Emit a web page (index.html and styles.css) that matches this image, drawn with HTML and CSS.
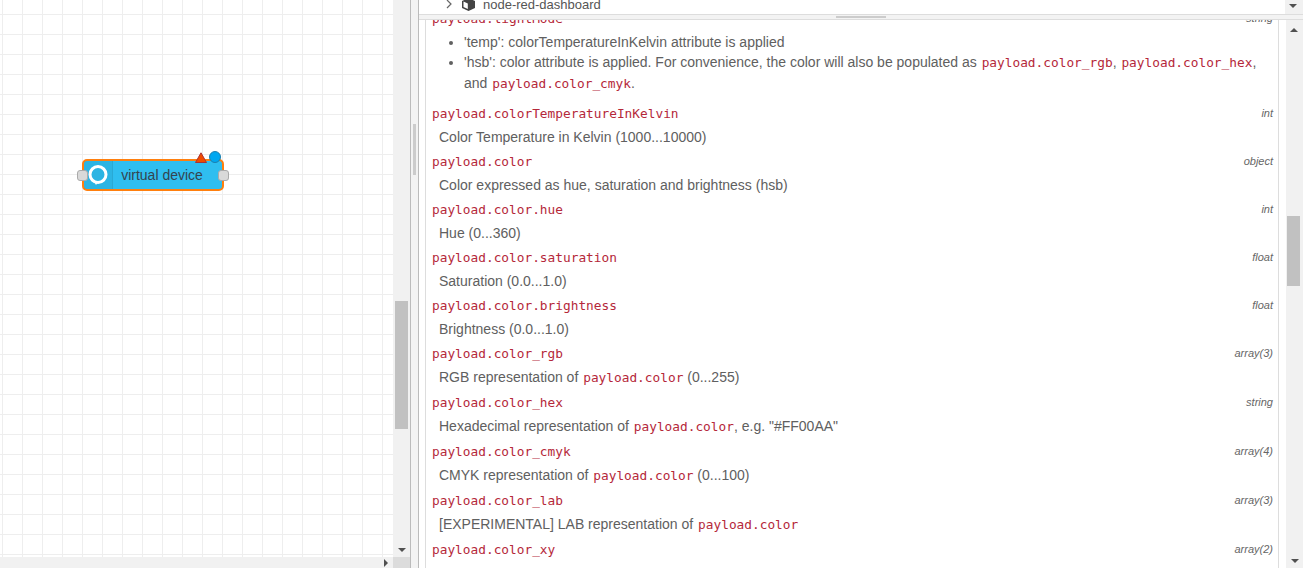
FILE: index.html
```
<!DOCTYPE html>
<html lang="en">
<head>
<meta charset="utf-8">
<title>Node-RED help</title>
<link rel="stylesheet" href="styles.css">
</head>
<body>
<div class="workspace">
  <div class="work-main">
    <div class="canvas">
      <div class="node">
        <div class="node-icon">
          <svg width="22" height="22" viewBox="0 0 22 22"><circle cx="11" cy="10.5" r="8" fill="none" stroke="#fff" stroke-width="3"/><path d="M6.5 16.5 L9 21 L11 18" fill="#fff"/></svg>
        </div>
        <div class="node-label">virtual device</div>
        <span class="port port-in"></span>
        <span class="port port-out"></span>
        <svg class="node-warn" width="12" height="11" viewBox="0 0 12 11"><path d="M6 0.8 L11.5 10.5 L0.5 10.5 Z" fill="#f04b00" stroke="#a33" stroke-width="1"/></svg>
        <span class="node-dot"></span>
      </div>
    </div>
    <div class="vbar vbar-canvas">
      <span class="arrow-down"></span>
      <span class="thumb thumb-canvas"></span>
    </div>
  </div>
  <div class="hbar">
    <div class="hbar-track"><span class="arrow-right"></span></div>
    <div class="corner"></div>
  </div>
</div>
<div class="separator"><span class="grip"></span></div>
<div class="sidebar">
  <div class="tree">
    <div class="tree-row">
      <svg class="chev" width="8" height="10" viewBox="0 0 8 10"><path d="M2 1 L6 5 L2 9" fill="none" stroke="#666" stroke-width="1.2"/></svg>
      <svg class="cube" width="13" height="13" viewBox="0 0 13 13"><path d="M6.5 0 L13 3 L13 10 L6.5 13 L0 10 L0 3 Z" fill="#444"/><path d="M1.5 3.6 L5.8 5.6 L5.8 11 L1.5 9 Z" fill="#fff"/></svg>
      <span>node-red-dashboard</span>
    </div>
    <div class="vbar vbar-tree"><span class="arrow-down arrow-tree"></span></div>
  </div>
  <div class="divider"><span class="divider-grip"></span></div>
  <div class="help-wrap">
    <div class="help">
      <div class="help-inner">
        <div class="prop prop-clipped"><code>payload.lightMode</code><i>string</i></div>
        <ul>
          <li>'temp': colorTemperatureInKelvin attribute is applied</li>
          <li>'hsb': color attribute is applied. For convenience, the color will also be populated as <code>payload.color_rgb</code>, <code>payload.color_hex</code>, and <code>payload.color_cmyk</code>.</li>
        </ul>
        <div class="prop"><code>payload.colorTemperatureInKelvin</code><i>int</i></div>
        <div class="desc">Color Temperature in Kelvin (1000...10000)</div>
        <div class="prop"><code>payload.color</code><i>object</i></div>
        <div class="desc">Color expressed as hue, saturation and brightness (hsb)</div>
        <div class="prop"><code>payload.color.hue</code><i>int</i></div>
        <div class="desc">Hue (0...360)</div>
        <div class="prop"><code>payload.color.saturation</code><i>float</i></div>
        <div class="desc">Saturation (0.0...1.0)</div>
        <div class="prop"><code>payload.color.brightness</code><i>float</i></div>
        <div class="desc">Brightness (0.0...1.0)</div>
        <div class="prop"><code>payload.color_rgb</code><i>array(3)</i></div>
        <div class="desc desc-code">RGB representation of <code>payload.color</code> (0...255)</div>
        <div class="prop"><code>payload.color_hex</code><i>string</i></div>
        <div class="desc desc-code">Hexadecimal representation of <code>payload.color</code>, e.g. "#FF00AA"</div>
        <div class="prop"><code>payload.color_cmyk</code><i>array(4)</i></div>
        <div class="desc desc-code">CMYK representation of <code>payload.color</code> (0...100)</div>
        <div class="prop"><code>payload.color_lab</code><i>array(3)</i></div>
        <div class="desc desc-code">[EXPERIMENTAL] LAB representation of <code>payload.color</code></div>
        <div class="prop"><code>payload.color_xy</code><i>array(2)</i></div>
      </div>
    </div>
    <div class="vbar vbar-help">
      <span class="arrow-up"></span>
      <span class="thumb thumb-help"></span>
      <span class="arrow-down"></span>
    </div>
  </div>
</div>
</body>
</html>
```
FILE: styles.css
```
* { box-sizing: border-box; }
html, body { margin: 0; height: 568px; overflow: hidden; }
body {
  display: flex;
  font-family: "Liberation Sans", Arial, sans-serif;
  font-size: 14px;
  color: #606060;
  background: #fff;
}
code {
  font-family: "DejaVu Sans Mono", monospace;
  font-size: 12.8px;
  color: #b5283a;
}
.desc code, li code { margin-left: 1px; }

/* workspace */
.workspace { width: 410px; flex: none; display: flex; flex-direction: column; }
.work-main { flex: 1; display: flex; min-height: 0; }
.canvas {
  position: relative;
  flex: 1;
  background-color: #fff;
  background-image:
    linear-gradient(to right, #eee 1px, transparent 1px),
    linear-gradient(to bottom, #eee 1px, transparent 1px);
  background-size: 20px 20px;
  background-position: 2px 14px;
}
.vbar { position: relative; width: 17px; flex: none; background: #f1f1f1; }
.thumb { position: absolute; left: 2px; width: 13px; background: #c1c1c1; }
.thumb-canvas { top: 301px; height: 128px; }
.thumb-help { top: 196px; left: 1px; height: 70px; }
.arrow-down, .arrow-up, .arrow-right { position: absolute; width: 0; height: 0; border-style: solid; border-color: transparent; }
.arrow-down { left: 5px; bottom: 5px; border-width: 4px 4px 0; border-top-color: #505050; }
.arrow-up { left: 4px; top: 8px; border-width: 0 4px 4px; border-bottom-color: #505050; }
.arrow-right { right: 5px; top: 2px; border-width: 4px 0 4px 4px; border-left-color: #505050; }
.arrow-tree { left: 4px; bottom: 6px; }

.hbar { height: 11px; flex: none; display: flex; }
.hbar-track { position: relative; flex: 1; background: #f1f1f1; }
.corner { width: 17px; background: #dcdcdc; }

/* node */
.node {
  position: absolute;
  left: 82px;
  top: 159px;
  width: 142px;
  height: 32px;
  display: flex;
  background: #2fbef0;
  border: 2px solid #ff7f0e;
  border-radius: 5px;
}
.node-icon {
  width: 29px;
  flex: none;
  display: flex;
  align-items: center;
  justify-content: center;
  background: rgba(0, 0, 0, 0.05);
  border-right: 1px solid rgba(0, 0, 0, 0.06);
}
.node-label { flex: 1; text-align: center; line-height: 28px; color: #34444f; font-size: 14px; padding-right: 11px; }
.port {
  position: absolute;
  top: 9px;
  width: 11px;
  height: 11px;
  background: #d9d9d9;
  border: 1px solid #aaa;
  border-radius: 3px;
}
.port-in { left: -7px; }
.port-out { right: -7px; }
.node-warn { position: absolute; left: 111px; top: -9px; }
.node-dot {
  position: absolute;
  left: 125px;
  top: -10px;
  width: 12px;
  height: 12px;
  border-radius: 50%;
  background: #00a7f0;
  border: 1px solid #1a7fb0;
}

/* separator */
.separator {
  position: relative;
  width: 9px;
  flex: none;
  background: #f3f3f3;
  border-left: 1px solid #bbb;
  border-right: 1px solid #bbb;
}
.grip { position: absolute; left: 2px; top: 124px; width: 3px; height: 51px; background: #ccc; }

/* sidebar */
.sidebar { flex: 1; min-width: 0; display: flex; flex-direction: column; }
.tree { height: 14px; flex: none; display: flex; overflow: hidden; }
.tree-row {
  flex: 1;
  display: flex;
  align-items: center;
  height: 8px;
  padding-left: 26px;
  font-size: 13px;
  color: #555;
  white-space: nowrap;
}
.chev { margin-right: 9px; }
.cube { margin-right: 8px; }
.vbar-tree { width: 18px; }
.divider {
  position: relative;
  height: 6px;
  flex: none;
  background: #f3f3f3;
  border-top: 1px solid #ddd;
  border-bottom: 1px solid #ddd;
}
.divider-grip { position: absolute; left: 417px; top: 1px; width: 50px; height: 2px; background: #ccc; }

.help-wrap { flex: 1; min-height: 0; display: flex; }
.help { flex: 1; min-width: 0; overflow: hidden; padding: 0 7px 0 6px; }
.help-inner {
  height: 100%;
  overflow: hidden;
  border-left: 1px solid #ddd;
  border-right: 1px solid #ddd;
  padding: 0 5px 0 6px;
}
.vbar-help { width: 17px; }

.prop { display: flex; justify-content: space-between; align-items: center; height: 24px; }
.prop i { font-size: 11px; color: #666; }
.prop-clipped { margin-top: -14px; }
.desc { height: 24px; line-height: 24px; padding-left: 7px; }
.desc-code { height: 25px; }
ul { margin: 2px 0 7px; padding: 0 0 0 32px; line-height: 21px; }
li { margin: 0; }
li:first-child { line-height: 20px; }
```
